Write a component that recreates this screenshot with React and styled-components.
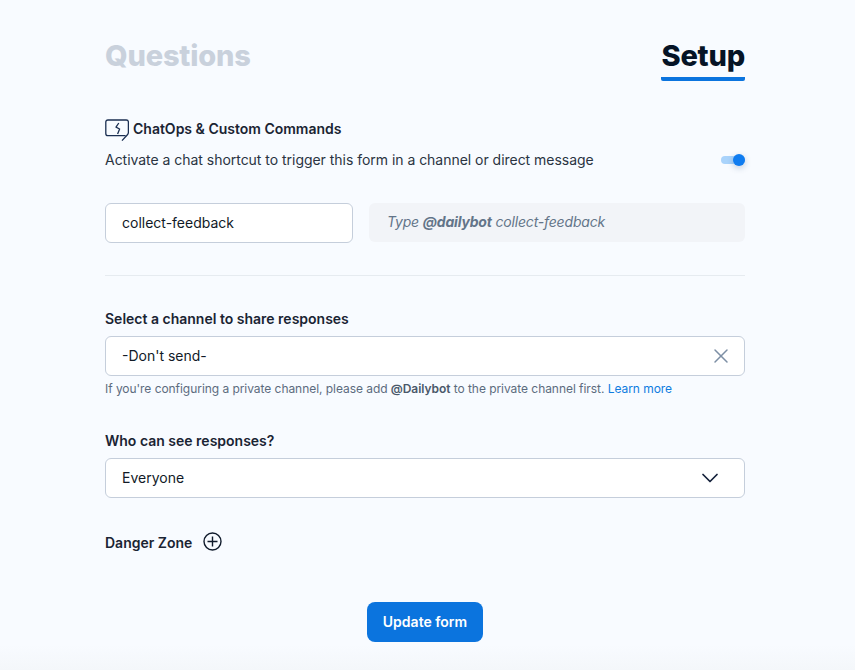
import React from "react"
import styled, { createGlobalStyle } from "styled-components"
import { X, ChevronDown } from "lucide-react"

const GlobalStyle = createGlobalStyle`
    html, body {
        margin: 0;
        padding: 0;
        background: #F8FBFF;
    }
    * {
        box-sizing: border-box;
    }
`

function ChatBolt() {
    return (
        <svg width="24" height="23" viewBox="0 0 24 23" fill="none" stroke="#1B2F52" strokeWidth="1.3">
            <path d="M3 1H21.3C22.7 1 23.4 1.7 23.4 3.1V13.4C23.4 14.6 23 15.2 22.2 16L17 21.6" />
            <path d="M20.6 16.6H3C1.6 16.6 0.8 15.8 0.8 14.4V3.1C0.8 1.7 1.6 1 3 1" />
            <path d="M13.8 4L11 8.2L14.6 10L12.6 15" strokeLinejoin="round" />
        </svg>
    )
}

function PlusCircle() {
    return (
        <svg width="19" height="19" viewBox="0 0 19 19" fill="none" stroke="#0F1A2B" strokeWidth="1.4">
            <circle cx="9.5" cy="9.5" r="8.5" />
            <path d="M9.5 4.5V14.5M4.5 9.5H14.5" />
        </svg>
    )
}

export default function App() {
    return (
        <>
            <GlobalStyle />
            <Page>
                <Content>
                    <Tabs>
                        <Tab>Questions</Tab>
                        <Tab $active>Setup</Tab>
                    </Tabs>

                    <SectionTitle>
                        <ChatBolt />
                        <span>ChatOps &amp; Custom Commands</span>
                    </SectionTitle>
                    <ToggleRow>
                        <p>Activate a chat shortcut to trigger this form in a channel or direct message</p>
                        <Toggle />
                    </ToggleRow>

                    <CommandRow>
                        <CommandInput>collect-feedback</CommandInput>
                        <CommandHint>
                            Type <b>@dailybot</b> collect-feedback
                        </CommandHint>
                    </CommandRow>

                    <Divider />

                    <Label>Select a channel to share responses</Label>
                    <Select $clearable>
                        <span>-Don't send-</span>
                        <X size={24} color="#7D8FA5" strokeWidth={1.5} />
                    </Select>
                    <Help>
                        If you're configuring a private channel, please add <b>@Dailybot</b> to the private channel first.{" "}
                        <a>Learn more</a>
                    </Help>

                    <Label $spaced>Who can see responses?</Label>
                    <Select>
                        <span>Everyone</span>
                        <ChevronDown size={28} color="#14213A" strokeWidth={1.5} />
                    </Select>

                    <DangerZone>
                        <span>Danger Zone</span>
                        <PlusCircle />
                    </DangerZone>

                    <Actions>
                        <Button>Update form</Button>
                    </Actions>
                </Content>
            </Page>
        </>
    )
}

const Page = styled.div`
    width: 100%;
    height: 670px;
    overflow: hidden;
    background: linear-gradient(to bottom, #F8FBFF 0, #F8FBFF 645px, #F4F7FA 670px);
    font-family: Inter, "Liberation Sans", sans-serif;
`

const Content = styled.div`
    display: flex;
    flex-direction: column;
    width: 640px;
    margin-left: 105px;
    padding-top: 38px;
`

const Tabs = styled.div`
    display: flex;
    justify-content: space-between;
    height: 43px;
    margin-bottom: 38px;
`

const Tab = styled.div`
    height: 43px;
    font-size: 29px;
    font-weight: 800;
    line-height: 35px;
    letter-spacing: -0.2px;
    color: ${(p) => (p.$active ? "#061426" : "#C9D1DC")};
    border-bottom: ${(p) => (p.$active ? "4px solid #0B74DE" : "none")};
    border-radius: 0 0 2px 2px;
`

const SectionTitle = styled.div`
    display: flex;
    align-items: flex-start;
    gap: 4px;
    height: 23px;
    font-size: 14px;
    font-weight: 600;
    line-height: 20px;
    color: #1A2433;
`

const ToggleRow = styled.div`
    display: flex;
    align-items: center;
    justify-content: space-between;
    height: 20px;
    margin-top: 8px;

    p {
        margin: 0;
        font-size: 14px;
        line-height: 20px;
        letter-spacing: -0.03px;
        color: #2A3442;
    }
`

const Toggle = styled.div`
    position: relative;
    width: 24px;
    height: 8px;
    border-radius: 4px;
    background: #A9D3FB;

    &::after {
        content: "";
        position: absolute;
        top: -2px;
        right: 0;
        width: 12px;
        height: 12px;
        border-radius: 50%;
        background: #0F7CF0;
        box-shadow: 0 2px 6px rgba(15, 60, 120, 0.25);
    }
`

const CommandRow = styled.div`
    display: flex;
    gap: 16px;
    margin-top: 33px;
`

const CommandInput = styled.div`
    display: flex;
    align-items: center;
    width: 248px;
    height: 40px;
    padding: 0 16px 1px;
    border: 1px solid #C5CEDB;
    border-radius: 6px;
    background: #FFFFFF;
    font-size: 14px;
    color: #111A27;
`

const CommandHint = styled.div`
    flex: 1;
    height: 39px;
    padding: 0 18px;
    border-radius: 6px;
    background: #F2F4F8;
    font-size: 14px;
    font-style: italic;
    line-height: 38px;
    letter-spacing: -0.18px;
    color: #637489;

    b {
        font-weight: 700;
    }
`

const Divider = styled.div`
    height: 1px;
    margin-top: 32px;
    background: #E6EBF0;
`

const Label = styled.div`
    height: 20px;
    margin-top: ${(p) => (p.$spaced ? "34px" : "33px")};
    margin-bottom: 7px;
    font-size: 14px;
    font-weight: 600;
    line-height: 20px;
    color: #1A2433;
`

const Select = styled.div`
    display: flex;
    align-items: center;
    justify-content: space-between;
    height: 40px;
    padding: 0 ${(p) => (p.$clearable ? "11px" : "20px")} 1px 16px;
    border: 1px solid #C5CEDB;
    border-radius: 6px;
    background: #FFFFFF;
    font-size: 14px;
    color: #111A27;
`

const Help = styled.div`
    height: 16px;
    margin-top: 5px;
    font-size: 12px;
    line-height: 16px;
    letter-spacing: -0.05px;
    color: #5C6B7E;

    b {
        font-weight: 600;
        color: #4A586A;
    }

    a {
        color: #0F7CE0;
    }
`

const DangerZone = styled.div`
    display: flex;
    align-items: center;
    gap: 11px;
    height: 20px;
    margin-top: 34px;
    font-size: 14px;
    font-weight: 600;
    color: #1A2433;

    svg {
        margin-top: -2px;
    }
`

const Actions = styled.div`
    display: flex;
    justify-content: center;
    margin-top: 50px;
`

const Button = styled.button`
    width: 116px;
    height: 40px;
    padding: 0 0 1px;
    border: none;
    border-radius: 8px;
    background: #0B74DE;
    font-family: inherit;
    font-size: 14px;
    font-weight: 600;
    color: #FFFFFF;
`
